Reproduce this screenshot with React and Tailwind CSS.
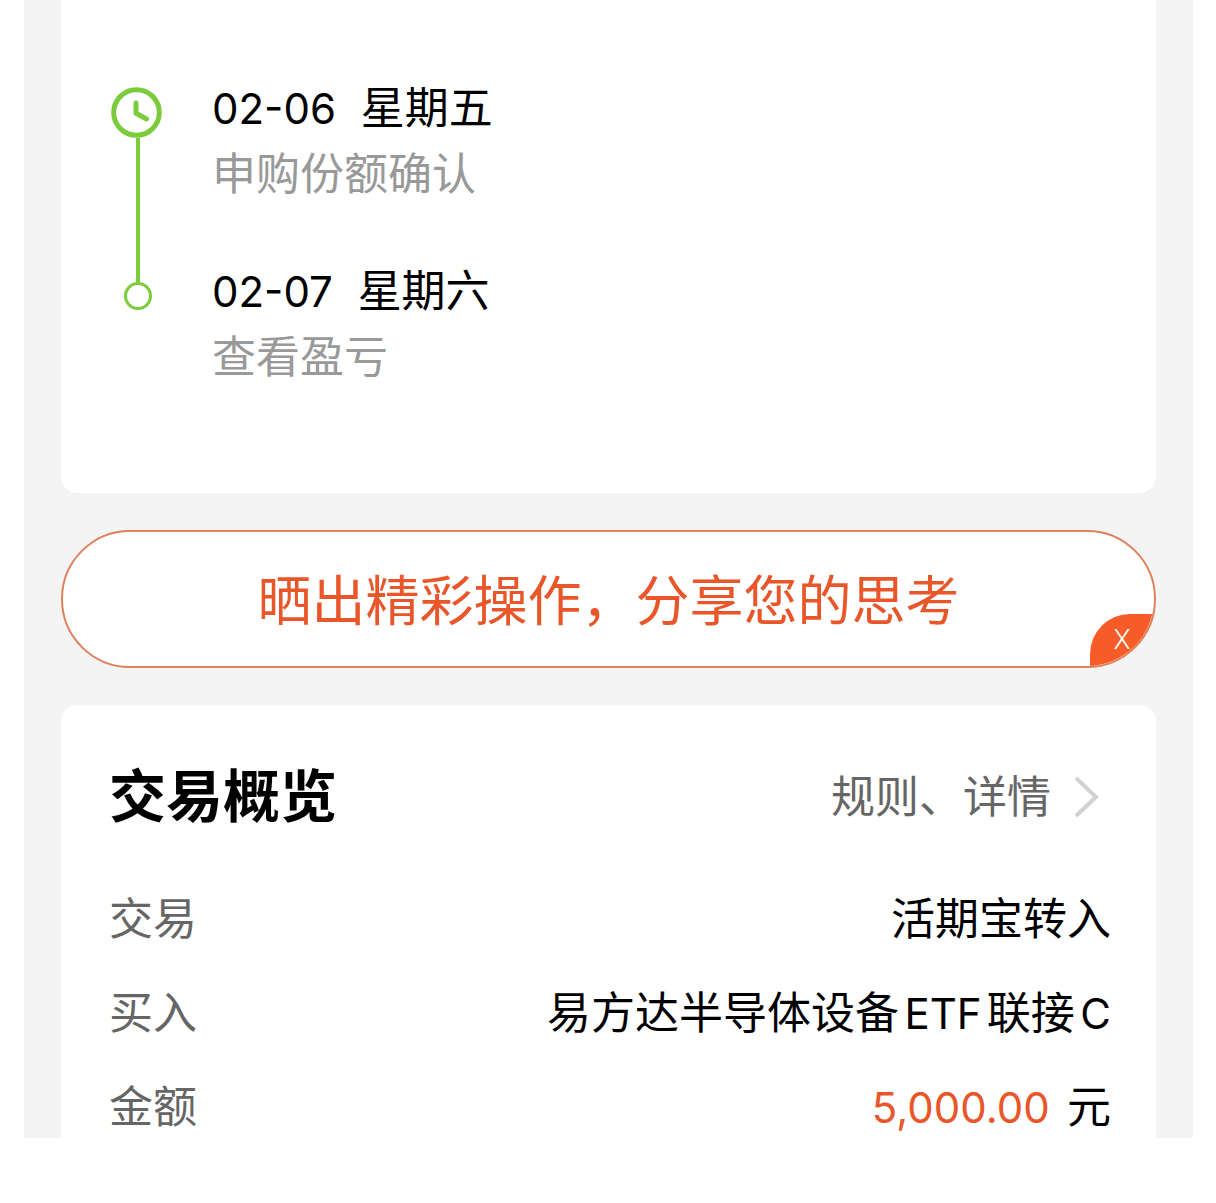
const steps = [
    { date: "02-06", weekday: "星期五", text: "申购份额确认", active: true },
    { date: "02-07", weekday: "星期六", text: "查看盈亏", active: false },
];

const details = [
    { label: "交易", value: "活期宝转入" },
    { label: "买入", value: <>易方达半导体设备<Latin>ETF</Latin>联接<Latin>C</Latin></> },
    { label: "金额", amount: "5,000.00", value: "元" },
];

// Cifras y letras latinas, un poco más pequeñas que el texto chino
function Latin({ children }) {
    return <span className="text-[42px] leading-none">{children}</span>;
}

function ClockIcon() {
    return (
        <svg className="mt-3 h-[51px] w-14 shrink-0" viewBox="0 0 56 51" fill="none" aria-hidden="true">
            <circle cx="26.5" cy="25.5" r="22.8" stroke="#7ccb3c" strokeWidth="5" />
            <path d="M26 16V26.3L36.5 32" stroke="#7ccb3c" strokeWidth="5" strokeLinecap="round" strokeLinejoin="round" />
        </svg>
    );
}

function ChevronIcon() {
    return (
        <svg className="h-11 w-7" viewBox="0 0 28 44" fill="none" aria-hidden="true">
            <path d="M3 3L23 22L3 41" stroke="#d2d2d2" strokeWidth="4" />
        </svg>
    );
}

export default function App() {
    return (
        <div className="min-h-screen bg-white pr-[23px] pl-6 font-['Inter','Noto_Sans_CJK_SC',sans-serif] text-[44px] leading-[62px] text-black">
            <main className="bg-[#f4f4f4] px-[37px]">
                {/* Progreso de la operación */}
                <section className="rounded-b-2xl bg-white pt-[75px] pb-[103px] pl-[49px]">
                    <ol>
                        {steps.map((step) => (
                            <li key={step.date} className="flex gap-[46px]">
                                <div className="flex w-14 shrink-0 flex-col items-center">
                                    {step.active ? (
                                        <>
                                            <ClockIcon />
                                            <span className="w-1 flex-1 bg-[#7ccb3c]" />
                                        </>
                                    ) : (
                                        <>
                                            <span className="h-6 w-1 bg-[#7ccb3c]" />
                                            <span className="size-7 rounded-full border-3 border-[#7ccb3c]" />
                                        </>
                                    )}
                                </div>
                                <div className={step.active ? "pb-[51px] leading-[66px]" : "leading-[66px]"}>
                                    <p className="whitespace-pre"><Latin>{step.date}</Latin>{"  "}{step.weekday}</p>
                                    <p className="text-[#999999]">{step.text}</p>
                                </div>
                            </li>
                        ))}
                    </ol>
                </section>

                {/* Banner para compartir */}
                <div className="relative my-[37px] overflow-hidden rounded-full border-2 border-[#e0805c] bg-white">
                    <a href="#share" className="block pt-[35px] pb-[29px] text-center text-[54px] leading-[70px] text-[#e8562a]">
                        晒出精彩操作，分享您的思考
                    </a>
                    <button
                        type="button"
                        className="absolute right-0 bottom-0 h-[52px] w-16 rounded-tl-[40px] bg-[#f75c28] font-['Roboto',sans-serif] text-[28px] leading-[52px] font-light text-white"
                    >
                        X
                    </button>
                </div>

                {/* Resumen */}
                <section className="rounded-t-2xl bg-white pt-[50px] pr-[45px] pl-12">
                    <div className="mb-[49px] flex items-center justify-between">
                        <h2 className="text-[57px] leading-[84px] font-bold">交易概览</h2>
                        <a href="#rules" className="flex items-center gap-[22px] pr-[10px] text-[#666666]">
                            规则、详情
                            <ChevronIcon />
                        </a>
                    </div>
                    <dl className="space-y-8">
                        {details.map((item) => (
                            <div key={item.label} className="flex justify-between">
                                <dt className="text-[#666666]">{item.label}</dt>
                                <dd className="[text-autospace:normal]">
                                    {item.amount && <span className="mr-3 text-[#e8562a]"><Latin>{item.amount}</Latin></span>}
                                    {item.value}
                                </dd>
                            </div>
                        ))}
                    </dl>
                </section>
            </main>
        </div>
    );
}
